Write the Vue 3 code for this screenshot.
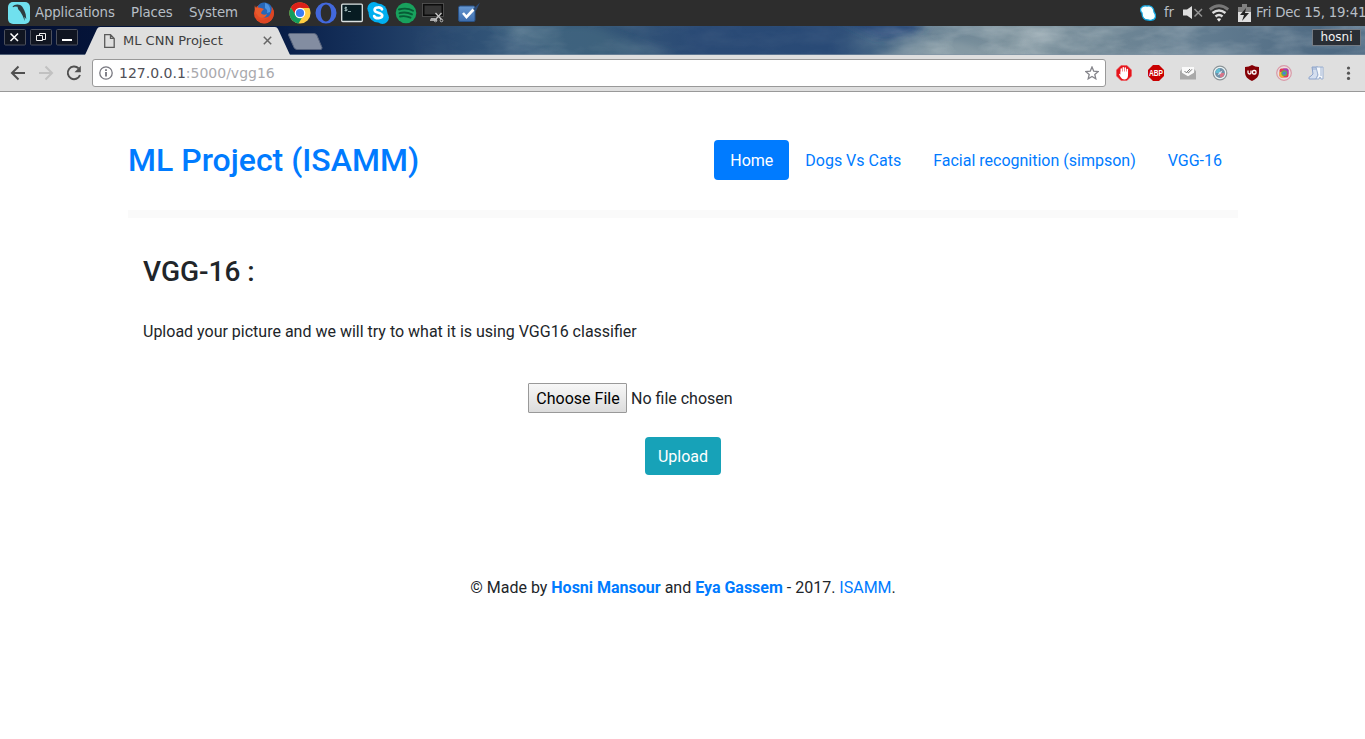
<script setup>
const navItems = [
  { label: 'Home', active: true },
  { label: 'Dogs Vs Cats', active: false },
  { label: 'Facial recognition (simpson)', active: false },
  { label: 'VGG-16', active: false },
]
</script>

<template>
  <div class="screen">
    <div class="panel">
      <svg class="logo" width="22" height="22" viewBox="0 0 22 22">
        <rect width="22" height="22" rx="5" fill="#70e0ee" />
        <path d="M4.500 4.700 6 3.200c3-1.300 6.500-1 8.300 1.600 1.700 2.500 2.700 5 3.400 7.500l.6 5-1.800-2.500.3 4.200-2.300-5.500-2.300-4-2-2.200-.7-2.600-2.500-.2-2 .8z" fill="#2e3c40" />
      </svg>
      <span class="menu m-app">Applications</span>
      <span class="menu m-places">Places</span>
      <span class="menu m-system">System</span>
      <svg width="22" height="22" viewBox="0 0 22 22">
        <circle cx="11" cy="11.500" r="10" fill="#e44b25" />
        <path d="M5 4C7 1 10 0 13 .8c4 .7 6.500 4 6 8-.4 5-4 7.500-8 6.500-4-.3-6-3-6-6z" fill="#2667b8" />
        <path d="M12 1c4 1 6 5 5 9l-3 1c1-3-1-4-2-5z" fill="#4c92e0" />
        <path d="M2 3c0 2 1 3 2 3 2-1 3 0 4 0l3 1-2 2-1 2c1 2 4 2 6 1-1 4-6 5-9 2-3-3-4-7-3-11z" fill="#e85a2c" />
        <path d="M19 5c4 6 1 14-5 16-5 1-9-1-11-5 5 4 15 3 16-11z" fill="#dc4523" />
      </svg>
      <svg class="g14" width="22" height="22" viewBox="0 0 22 22">
        <circle cx="11" cy="11" r="10.600" fill="#ffcd42" />
        <path d="M1.800 5.700A10.600 10.600 0 0 1 20.500 6H11L7 14z" fill="#dc2119" />
        <path d="M1.800 5.700A10.600 10.600 0 0 0 9.500 21.500L14 14 7 13z" fill="#139d5d" />
        <circle cx="11" cy="11" r="5.300" fill="#fff" />
        <circle cx="11" cy="11" r="4.100" fill="#397cf3" />
      </svg>
      <svg class="g4" width="22" height="22" viewBox="0 0 22 22">
        <path fill-rule="evenodd" d="M11 .5a10.500 10.500 0 1 0 0 21 10.500 10.500 0 0 0 0-21zm0 2c3.300 0 5.200 3.800 5.200 8.500s-1.900 8.500-5.200 8.500S5.800 15.700 5.800 11 7.700 2.500 11 2.500z" fill="#4268dc" />
      </svg>
      <svg class="g4" width="22" height="22" viewBox="0 0 22 22">
        <rect x=".7" y="2.200" width="20.600" height="17.300" rx="1" fill="#071c22" stroke="#dce3e3" stroke-width="1.300" />
        <path d="M6 5.500H4V7h2v1.500H3.500M4.800 4.500v5M7 9.500h3" fill="none" stroke="#a7c0c0" stroke-width=".8" />
      </svg>
      <svg class="g4" width="22" height="22" viewBox="0 0 22 22">
        <circle cx="6.800" cy="6.500" r="6.400" fill="#00aff0" /><circle cx="15.500" cy="15.500" r="6.400" fill="#00aff0" />
        <circle cx="11" cy="11" r="9.500" fill="#00aff0" />
        <path d="M15 7.300C13.800 4.700 7.600 4.800 7.600 8c0 3.700 7.600 1.800 7.600 5.600 0 3.300-6.700 3.400-8 .5" fill="none" stroke="#fff" stroke-width="2.700" stroke-linecap="round" />
      </svg>
      <svg class="g6" width="22" height="22" viewBox="0 0 22 22">
        <circle cx="11" cy="11" r="10.300" fill="#18a15d" />
        <path d="M4 7.500c5-1.500 10-1 14 1.300M4.500 11.200c4.500-1.300 8.500-.8 12.500 1.200M5 14.500c4-.9 7-.5 10.500 1.200" fill="none" stroke="#075c36" stroke-width="1.900" stroke-linecap="round" />
      </svg>
      <svg class="g5" width="23" height="22" viewBox="0 0 23 22">
        <rect x="1.500" y="2.500" width="19" height="11" fill="#353535" stroke="#0c0c0c" stroke-width="2" />
        <rect x=".5" y="1.500" width="21" height="13" fill="none" stroke="#575757" stroke-width=".8" />
        <path d="M9 16h4l2 2v1H8v-1z" fill="#aaa" />
        <path d="m13.500 11 6 6.500m0-6.500-6 6.500" stroke="#c6c6c6" stroke-width="1.300" />
        <circle cx="13.500" cy="18.500" r="1.300" fill="none" stroke="#bbb" /><circle cx="19.500" cy="18.500" r="1.300" fill="none" stroke="#bbb" />
      </svg>
      <svg class="g13" width="23" height="22" viewBox="0 0 23 22">
        <defs><linearGradient id="check-bg" x2="0" y2="1"><stop stop-color="#6798d2" /><stop offset="1" stop-color="#3d6dad" /></linearGradient></defs>
        <rect x=".6" y="4" width="16.400" height="15.500" rx="1.500" fill="url(#check-bg)" stroke="#285289" />
        <path d="m14 8 8-7.500L18 9z" fill="#2c4b76" />
        <path d="m5 11 3.500 4L15.500 7.500" fill="none" stroke="#fff" stroke-width="2.600" />
      </svg>
      <div class="tray">
        <svg width="16" height="16" viewBox="0 0 16 16">
          <path d="M1 3C3 0 5 1 7 1c4-1 7 2 7 6 3 4 1 8-2 8-2 1-3 0-4 0-4 0-6-3-6-7C1 7 0 5 1 3z" fill="#f8ffff" stroke="#11a5df" stroke-width="1.300" />
        </svg>
        <span class="lang">fr</span>
        <svg class="volume" width="20" height="14" viewBox="0 0 20 14">
          <path d="M0 3.500h4L9 0v13l-5-3.500H0z" fill="#dfdfdf" /><path d="m11.500 3 7.500 7.500m0-7.500-7.500 7.500" stroke="#929292" stroke-width="1.500" />
        </svg>
        <svg class="wifi" width="20" height="18" viewBox="0 0 20 18">
          <path d="M.8 5.500q9.200-7.500 18.400 0" fill="none" stroke="#777" stroke-width="3" />
          <path d="M3.500 9q6.500-5 13 0M6.500 12.500q3.500-3 7 0" fill="none" stroke="#ddd" stroke-width="2.500" />
          <path d="m7.800 15 2.200 2.800 2.200-2.800q-2.200-1.700-4.400 0z" fill="#eee" />
        </svg>
        <svg class="battery" width="13" height="18" viewBox="0 0 13 18">
          <path d="M4 0h5v3h4v15H0V3h4z" fill="#dedede" /><path d="M4 0h5v3h4v5H0V3h4z" fill="#818181" />
          <path d="m8 4-6 7h4l-2 6 7-8H7z" fill="#222" />
        </svg>
        <span class="clock">Fri Dec 15, 19:41</span>
      </div>
    </div>

    <div class="tabstrip">
      <svg class="sky" width="1365" height="29" viewBox="0 0 1365 29" preserveAspectRatio="none">
        <defs>
          <linearGradient id="sky-base">
            <stop stop-color="#030f31" /><stop offset=".2" stop-color="#071c46" /><stop offset=".26" stop-color="#15305a" />
            <stop offset=".34" stop-color="#2d4e73" /><stop offset=".38" stop-color="#365a7b" /><stop offset=".44" stop-color="#355777" /><stop offset=".51" stop-color="#2a4a75" />
            <stop offset=".61" stop-color="#294a76" /><stop offset=".645" stop-color="#3d5f80" /><stop offset=".68" stop-color="#6b8495" /><stop offset=".74" stop-color="#7c919c" />
            <stop offset=".8" stop-color="#718896" /><stop offset=".88" stop-color="#627c90" /><stop offset="1" stop-color="#49657f" />
          </linearGradient>
          <linearGradient id="cloud-fade"><stop offset=".3" stop-color="#000" /><stop offset=".38" stop-color="#777" /><stop offset=".5" stop-color="#222" /><stop offset=".62" stop-color="#222" /><stop offset=".7" stop-color="#fff" /><stop offset="1" stop-color="#aaa" /></linearGradient>
          <mask id="cloud-mask"><rect width="1365" height="29" fill="url(#cloud-fade)" /></mask>
          <filter id="cloud-soft" x="-20%" y="-80%" width="140%" height="260%"><feGaussianBlur stdDeviation="7 3" /></filter>
          <filter id="cloud-wisps" x="0" y="0" width="100%" height="100%">
            <feTurbulence type="fractalNoise" baseFrequency=".018 .05" numOctaves="4" seed="4" />
            <feColorMatrix values="0 0 0 0 .66  0 0 0 0 .72  0 0 0 0 .74  1.600 0 0 0 -.55" />
          </filter>
        </defs>
        <rect width="1365" height="29" fill="url(#sky-base)" />
        <g filter="url(#cloud-soft)">
          <path d="m495 0 60 30h120L590 0z" fill="#4f7589" opacity=".35" />
          <path d="m840-6 40 20 35-6 10-14z" fill="#234778" opacity=".9" />
          <path d="m870 34 40-16 45-4 60 20z" fill="#a3b1b3" opacity=".4" />
        </g>
        <g mask="url(#cloud-mask)"><rect width="1365" height="29" filter="url(#cloud-wisps)" opacity=".6" /></g>
        <path d="M0 28.500h1365" stroke="#8193a4" stroke-opacity=".6" />
      </svg>
      <div class="winbuttons">
        <svg v-for="kind in ['close', 'restore', 'minimise']" :key="kind" width="22" height="17" viewBox="0 0 22 17">
          <rect x=".5" y=".5" width="21" height="15.500" rx="1" fill="#101521" stroke="#4c505c" />
          <path v-if="kind === 'close'" d="m6.500 4.500 7.500 7.500m0-7.500-7.500 7.500" stroke="#fff" stroke-width="1.500" />
          <path v-else-if="kind === 'restore'" d="M9.500 6.500v-2h6v6h-3M6.500 6.500h6v5h-6z" fill="none" stroke="#eee" />
          <path v-else d="M6 10h10v2H6z" fill="#fff" />
        </svg>
      </div>
      <div class="tab">
        <svg class="tabshape" width="206" height="29" viewBox="0 0 206 29">
          <path d="M0 29 12 3q1-2 3-2h175q2 0 3 2l12 26z" fill="#dfdfdf" />
        </svg>
        <svg class="docicon" width="11" height="14" viewBox="0 0 11 14">
          <path d="M.7.7h5.800l3.700 3.700v8.900H.7zM6.500.7v3.700h3.700" fill="none" stroke="#5a5a5a" stroke-width="1.300" />
        </svg>
        <span class="tabtitle">ML CNN Project</span>
        <svg class="tabclose" width="9" height="9" viewBox="0 0 9 9"><path d="m.8.8 7.400 7.400m0-7.400L.8 8.200" stroke="#666" stroke-width="1.500" /></svg>
      </div>
      <svg class="newtab" width="35" height="17" viewBox="0 0 35 17">
        <path d="M2 .5h24q2 0 3 2l5 12q0 2-1 2H9q-2 0-3-2L.5 2Q0 .5 2 .5z" fill="#838da1" stroke="#58647d" />
      </svg>
      <span class="user">hosni</span>
    </div>

    <div class="toolbar">
      <svg class="back" width="16" height="16" viewBox="0 0 16 16"><path d="M15 8H2m6.500-6.500L2 8l6.500 6.500" fill="none" stroke="#505050" stroke-width="2" /></svg>
      <svg class="forward" width="16" height="16" viewBox="0 0 16 16"><path d="M1 8h13M7.500 1.500 14 8l-6.500 6.500" fill="none" stroke="#c1c1c1" stroke-width="2" /></svg>
      <svg class="reload" width="16" height="16" viewBox="0 0 16 16"><path d="M12.600 3.400A6.300 6.300 0 1 0 14 10" fill="none" stroke="#505050" stroke-width="2" /><path d="M14.800.8v6.400H8.500z" fill="#505050" /></svg>
      <div class="omnibox">
        <svg class="info" width="14" height="14" viewBox="0 0 14 14"><circle cx="7" cy="7" r="6.200" fill="none" stroke="#77777f" stroke-width="1.300" /><path d="M7 6v4.500M7 3.200v1.700" stroke="#6c6c75" stroke-width="1.700" /></svg>
        <span class="url">127.0.0.1<span class="path">:5000/vgg16</span></span>
        <svg class="star" width="14" height="14" viewBox="0 0 14 14"><path d="m7 1 1.700 4.100 4.500.4-3.400 2.900 1 4.400L7 10.500l-3.800 2.300 1-4.400L.8 5.500l4.500-.4z" fill="none" stroke="#85858b" stroke-width="1.300" /></svg>
      </div>
      <div class="extensions">
        <svg width="16" height="16" viewBox="0 0 16 16"><path d="M5 .5h6L15.500 5v6L11 15.500H5L.5 11V5z" fill="#e5151c" stroke="#ee5357" stroke-width=".6" /><path d="M5.300 8.500V4M7.300 8V2.700M9.300 8V3M11.300 9V4.500" stroke="#fff" stroke-width="1.500" stroke-linecap="round" /><path d="M4.600 6.500H12v4c0 2.500-1.500 4-3.700 4C5.500 14.500 4.500 12 3 9.300q.5-1.200 1.600.3z" fill="#fff" /></svg>
        <svg width="16" height="16" viewBox="0 0 16 16"><path d="M5 0h6l5 5v6l-5 5H5l-5-5V5z" fill="#c90000" /><text x="8" y="11" textLength="14" lengthAdjust="spacingAndGlyphs" class="abp">ABP</text></svg>
        <svg width="16" height="16" viewBox="0 0 16 16"><path d="m0 6 2-2h12l2 2v8H0z" fill="#b7b7b7" /><path d="m0 6 8 5 8-5v8.500H0z" fill="#a9a9a9" /><path d="M2 2h12v5.800l-6 3.400-6-3.400z" fill="#fafafa" /><path d="m4.500 6 1.800 1.800L10 4M7.500 7.300l.8.700L12 4.300" fill="none" stroke="#777" /></svg>
        <svg width="16" height="16" viewBox="0 0 16 16"><circle cx="8" cy="8" r="6.800" fill="#eef6f7" stroke="#8c9498" stroke-width="1.200" /><circle cx="8" cy="8" r="4.900" fill="#6f8fa6" /><path d="M3.500 8A4.500 4.500 0 0 1 8 3.500V8z" fill="#63bfd5" /><path d="M8 8h4.500A4.500 4.500 0 0 1 8 12.500z" fill="#d77588" /><path d="m5.500 10.500 1.700-3.300L10.500 5.500 8.800 8.800z" fill="#d9e1ef" /></svg>
        <svg width="16" height="16" viewBox="0 0 16 16"><path d="M8 0q3 2 7 2v5c0 5-3 7-7 9-4-2-7-4-7-9V2q4 0 7-2z" fill="#850006" /><path d="M4 5.500v2q0 1.500 1.500 1.500T7 7.500v-2" fill="none" stroke="#fff" stroke-width="1.300" /><rect x="8.500" y="5.500" width="3.500" height="3.500" rx="1.300" fill="none" stroke="#fff" stroke-width="1.300" /></svg>
        <svg width="16" height="16" viewBox="0 0 16 16"><circle cx="8" cy="8" r="7.300" fill="#eadfe0" stroke="#d99aa8" stroke-width="1.200" /><rect x="3.500" y="3.500" width="9" height="9" rx="2" fill="#e43c57" /><path d="M3.500 7h4v5.500h-2q-2 0-2-2z" fill="#f2b52d" /><path d="M7 3.500h3.500q2 0 2 2v4L9 6z" fill="#a73eb5" /><circle cx="8.200" cy="8.200" r="2.900" fill="#62af55" /><circle cx="8.200" cy="8.200" r="1.600" fill="#477de0" /></svg>
        <svg width="16" height="16" viewBox="0 0 16 16"><path d="M4 2h6v8l-2 4H1q-1-2 2-3l2-2z" fill="#d5dfef" stroke="#8da4cc" /><path d="M8 2h7v12h-2l-1-2-1 2H8l2-4z" fill="#f5f8fc" stroke="#9aafd0" /><path d="M5 2v3M7 2v3m6-3v9" stroke="#8ba1c6" stroke-width=".8" /></svg>
        <svg width="16" height="16" viewBox="0 0 16 16"><circle cx="8.500" cy="3" r="1.600" fill="#555" /><circle cx="8.500" cy="8.200" r="1.600" fill="#555" /><circle cx="8.500" cy="13.400" r="1.600" fill="#555" /></svg>
      </div>
    </div>

    <div class="page">
      <header class="header">
        <h2>ML Project (ISAMM)</h2>
        <nav>
          <a v-for="item in navItems" :key="item.label" :class="{ active: item.active }">{{ item.label }}</a>
        </nav>
      </header>
      <main>
        <h3>VGG-16 :</h3>
        <p>Upload your picture and we will try to what it is using VGG16 classifier</p>
        <div class="filefield"><button class="choose">Choose File</button><span>No file chosen</span></div>
        <button class="upload">Upload</button>
      </main>
      <footer>© Made by <b>Hosni Mansour</b> and <b>Eya Gassem</b> - 2017. <a>ISAMM</a>.</footer>
    </div>
  </div>
</template>

<style>
body { background: #fff; overflow: hidden; }
</style>

<style scoped>
.screen { width: 1365px; height: 739px; overflow: hidden; background: #fff; }
svg { display: block; flex: none; }
.panel { height: 26px; display: flex; align-items: center; background: #2d2d2d; color: #b7bec5; font: 13.33px/26px "DejaVu Sans", sans-serif; letter-spacing: -.14px; padding-left: 8px; white-space: nowrap; box-sizing: border-box; }
.menu { flex: none; height: 26px; }
.m-app { width: 96px; margin-left: 5px; }
.m-places { width: 58px; }
.m-system { width: 64px; }
.g14 { margin-left: 14px; }
.g4 { margin-left: 4px; }
.g5 { margin-left: 5px; }
.g6 { margin-left: 6px; }
.g13 { margin-left: 13px; }
.tray { margin-left: auto; width: 225px; flex: none; display: flex; align-items: center; }
.lang { width: 11px; margin-left: 8px; height: 26px; }
.volume { margin-left: 9px; }
.wifi { margin-left: 6px; }
.battery { margin-left: 9px; }
.clock { margin-left: 5px; flex: none; height: 26px; letter-spacing: -.22px; }

.tabstrip { position: relative; height: 29px; display: flex; }
.sky { position: absolute; inset: 0; z-index: 0; }
.winbuttons { z-index: 1; display: flex; gap: 4px; padding: 3px 0 0 4px; width: 81px; box-sizing: border-box; flex: none; }
.tab { position: relative; z-index: 1; margin-left: 4px; width: 206px; display: flex; align-items: center; flex: none; }
.tabshape { position: absolute; left: 0; top: 0; }
.docicon { position: relative; margin-left: 19px; }
.tabtitle { position: relative; margin-left: 8px; width: 140px; color: #404040; font: 13px/28px "DejaVu Sans", sans-serif; }
.tabclose { position: relative; }
.newtab { z-index: 1; margin: 7px 0 0 -3px; }
.user { z-index: 1; box-sizing: border-box; width: 49px; height: 17px; margin: 3px 4px 0 auto; border: 1px solid #747b84; background: #292e35; color: #f3f3f3; font: 12px/15px "DejaVu Sans", sans-serif; text-align: center; }

.toolbar { box-sizing: border-box; height: 37px; border-bottom: 1px solid #999; background: #dfdfdf; display: flex; align-items: center; padding-left: 10px; }
.forward { margin-left: 12px; }
.reload { margin-left: 12px; }
.omnibox { box-sizing: border-box; margin-left: 10px; width: 1014px; height: 28px; border: 1px solid #999; border-radius: 3px; background: #fff; display: flex; align-items: center; padding: 0 6px; flex: none; }
.url { margin-left: 6px; color: #505057; font: 14px/26px "DejaVu Sans", sans-serif; }
.path { color: #a9a9ad; }
.star { margin-left: auto; }
.extensions { display: flex; gap: 16px; margin-left: 10px; }
.abp { fill: #fff; font: bold 8.500px "Liberation Sans", sans-serif; text-anchor: middle; }

.page { box-sizing: border-box; width: 1110px; margin: 0 0 0 128px; padding-top: 48px; color: #212529; font: 16px/24px Roboto, sans-serif; }
.header { box-sizing: border-box; height: 78px; border-bottom: 8px solid #fafafa; display: flex; justify-content: space-between; align-items: flex-start; }
h2 { margin: 0; color: #007bff; font-size: 32px; line-height: 40px; font-weight: 500; }
nav { display: flex; }
nav a { padding: 9px 16px 7px; color: #007bff; border-radius: 4px; white-space: nowrap; }
nav a.active { background: #007bff; color: #fff; }
main { padding: 0 15px; display: flex; flex-direction: column; }
h3 { margin: 37px 0 0; font-size: 28px; line-height: 34px; font-weight: 500; }
p { margin: 31px 0 0; }
.filefield { display: flex; align-items: center; margin: 39px 0 0 385px; }
.filefield span { margin-left: 4px; padding-top: 2px; }
.choose { box-sizing: border-box; width: 99px; height: 30px; padding: 2px 0 0 1px; font: 16px/24px Roboto, sans-serif; color: #000; background: linear-gradient(#f7f7f7, #dcdcdc); border: 1px solid #999; border-radius: 1px; white-space: nowrap; }
.upload { align-self: center; box-sizing: border-box; width: 76px; height: 38px; margin-top: 24px; border: 0; padding: 2px 0 0; border-radius: 4px; background: #17a2b8; color: #fff; font: 16px/24px Roboto, sans-serif; }
footer { margin-top: 101px; text-align: center; }
footer b, footer a { color: #007bff; }
</style>
